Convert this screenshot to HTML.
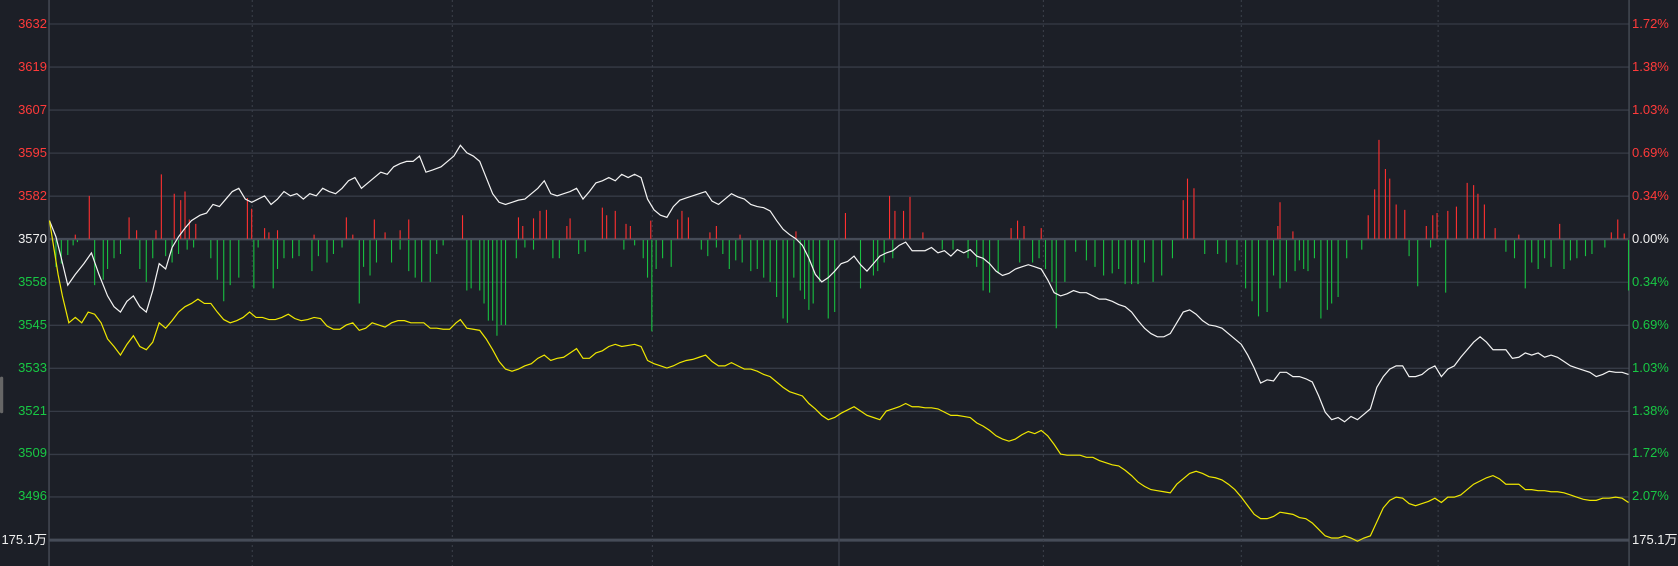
<!DOCTYPE html>
<html><head><meta charset="utf-8"><style>
html,body{margin:0;padding:0;background:#1c1f27;width:1678px;height:566px;overflow:hidden;position:relative;font-family:"Liberation Sans","Noto Sans CJK SC",sans-serif;}
svg{position:absolute;left:0;top:0}
.l{position:absolute;font-size:13px;line-height:14px;right:1631px;text-align:right;white-space:nowrap}
.r{position:absolute;font-size:13px;line-height:14px;left:1632px;white-space:nowrap}
.red{color:#ff3a3a}.grn{color:#18c844}.wht{color:#f0f0f0}
</style></head><body>
<svg width="1678" height="566" viewBox="0 0 1560 526" preserveAspectRatio="none">
<g stroke="#363b46" stroke-width="1.3" vector-effect="non-scaling-stroke" fill="none">
<path vector-effect="non-scaling-stroke" d="M45.6 22.3H1514.5M45.6 62.3H1514.5M45.6 102.3H1514.5M45.6 142.3H1514.5M45.6 182.3H1514.5M45.6 262.3H1514.5M45.6 302.3H1514.5M45.6 342.3H1514.5M45.6 382.3H1514.5M45.6 422.3H1514.5M45.6 461.8H1514.5"/>
</g>
<path d="M45.6 222.2H1514.5" stroke="#464c58" stroke-width="2.5" vector-effect="non-scaling-stroke"/>
<path d="M45.6 502H1514.5" stroke="#464c58" stroke-width="3" vector-effect="non-scaling-stroke"/>
<g stroke="#3c414c" stroke-width="1" stroke-dasharray="2 3" vector-effect="non-scaling-stroke">
<path vector-effect="non-scaling-stroke" d="M234.5 0V526M420.5 0V526M606.5 0V526M970 0V526M1154 0V526M1337 0V526"/>
</g>
<path d="M780 0V526" stroke="#3c414c" stroke-width="1.3" vector-effect="non-scaling-stroke"/>
<path d="M45.6 0V526M1514.5 0V526" stroke="#4a4f5a" stroke-width="1.3" vector-effect="non-scaling-stroke"/>
<rect x="0" y="350" width="3" height="34" rx="1.5" fill="#666"/>
<path stroke="#ff3030" stroke-width="1.1" vector-effect="non-scaling-stroke" d="M70 222V218M83 222V182M120 222V202M127 222V214M145 222V214M150 222V162M162 222V180M168 222V186M172 222V178M176 222V204M182 222V208M230 222V184M234 222V194M246 222V212M250 222V216M258 222V214M292 222V218M322 222V202M328 222V218M348 222V204M358 222V216M372 222V214M380 222V204M430 222V200M482 222V202M486 222V210M496 222V203M502 222V196M508 222V195M527 222V210M530 222V203M560 222V193M564 222V200M572 222V196M582 222V208M586 222V210M605 222V205M630 222V204M634 222V196M640 222V202M660 222V216M666 222V210M688 222V218M740 222V215M786 222V198M827 222V182M832 222V196M840 222V196M846 222V183M858 222V216M940 222V212M946 222V205M952 222V210M968 222V212M1100 222V186M1104 222V166M1110 222V175M1188 222V210M1190 222V188M1202 222V215M1272 222V200M1278 222V176M1282 222V130M1288 222V157M1292 222V166M1298 222V190M1306 222V195M1326 222V210M1332 222V200M1336 222V198M1346 222V196M1354 222V192M1364 222V170M1370 222V172M1374 222V180M1380 222V190M1390 222V212M1412 222V218M1450 222V208M1498 222V216M1504 222V204M1510 222V217"/>
<path stroke="#18c040" stroke-width="1.1" vector-effect="non-scaling-stroke" d="M52 223V248M57 223V245M63 223V237M68 223V228M72 223V225M88 223V265M96 223V260M100 223V250M106 223V240M112 223V236M130 223V250M136 223V262M142 223V240M154 223V238M160 223V244M166 223V236M174 223V232M180 223V230M196 223V240M202 223V260M208 223V280M214 223V265M222 223V258M236 223V268M240 223V230M254 223V268M258 223V250M264 223V240M272 223V240M278 223V238M290 223V252M296 223V238M304 223V244M310 223V236M318 223V230M334 223V282M338 223V248M344 223V256M350 223V244M364 223V244M372 223V232M380 223V252M386 223V258M392 223V262M400 223V262M406 223V236M412 223V228M434 223V270M438 223V268M446 223V270M450 223V282M454 223V298M458 223V298M462 223V312M466 223V302M470 223V302M480 223V240M488 223V230M496 223V232M514 223V240M520 223V240M538 223V236M544 223V234M580 223V232M590 223V228M598 223V240M602 223V258M606 223V308M610 223V250M616 223V240M624 223V248M652 223V232M658 223V238M666 223V230M672 223V236M678 223V250M684 223V242M690 223V244M698 223V252M704 223V250M710 223V258M716 223V262M722 223V276M728 223V296M732 223V300M738 223V258M744 223V270M748 223V278M752 223V288M756 223V282M762 223V262M770 223V296M776 223V290M800 223V268M812 223V256M816 223V252M822 223V244M830 223V240M876 223V232M886 223V232M900 223V240M908 223V248M914 223V270M920 223V272M928 223V254M948 223V244M960 223V244M966 223V240M972 223V250M978 223V262M982 223V305M990 223V262M1000 223V234M1010 223V242M1018 223V248M1026 223V256M1034 223V254M1040 223V250M1046 223V264M1052 223V264M1058 223V264M1064 223V244M1072 223V262M1080 223V256M1090 223V240M1120 223V236M1132 223V236M1140 223V244M1150 223V246M1158 223V268M1164 223V280M1170 223V294M1178 223V290M1184 223V256M1190 223V268M1196 223V262M1204 223V252M1208 223V242M1212 223V250M1216 223V252M1222 223V240M1228 223V296M1234 223V288M1238 223V282M1244 223V276M1252 223V240M1266 223V232M1310 223V238M1318 223V266M1330 223V230M1344 223V272M1400 223V234M1408 223V240M1418 223V268M1424 223V244M1430 223V250M1436 223V240M1442 223V248M1454 223V250M1460 223V242M1466 223V240M1474 223V238M1480 223V236M1492 223V230M1514 223V270"/>
<polyline fill="none" stroke="#f4f4f4" stroke-width="1.2" vector-effect="non-scaling-stroke" points="46,205 52,220 57,240 63,265 70,255 78,245 85,235 92,255 100,275 106,285 112,290 118,280 124,275 130,285 136,290 142,270 148,245 154,250 160,230 166,220 172,212 178,205 186,200 192,198 198,190 204,192 210,185 216,178 222,175 228,185 234,188 240,185 246,182 252,190 258,185 264,178 270,182 276,180 282,185 288,180 294,182 300,175 306,178 312,180 318,175 324,168 330,165 336,175 342,170 348,165 354,160 360,162 366,155 372,152 378,150 384,150 390,145 396,160 402,158 410,155 416,150 422,145 428,135 434,142 440,145 446,150 452,165 458,180 464,188 470,190 476,188 482,186 488,185 494,180 500,175 506,168 512,180 518,182 524,180 530,178 536,175 542,185 548,178 554,170 560,168 566,165 572,168 578,162 584,165 590,162 596,165 602,185 608,195 614,200 620,202 626,192 632,186 638,184 644,182 650,180 656,178 662,187 668,190 674,185 680,180 686,183 692,185 698,190 704,192 710,193 716,196 722,205 728,213 734,218 740,222 746,228 752,240 758,255 764,262 770,258 776,252 782,245 788,243 794,238 800,246 806,252 812,245 818,238 824,235 830,233 836,228 842,225 848,233 854,233 860,233 866,230 872,235 878,233 884,238 890,232 896,235 902,232 908,238 914,240 920,245 926,252 932,256 938,254 944,250 950,248 956,246 962,248 968,250 974,260 980,272 986,275 992,273 998,270 1004,272 1010,272 1016,275 1022,278 1028,278 1034,280 1040,283 1046,285 1052,290 1058,298 1064,305 1070,310 1076,313 1082,313 1088,310 1094,300 1100,290 1106,288 1112,292 1118,298 1124,302 1130,303 1136,305 1142,310 1148,315 1154,320 1160,330 1166,342 1172,356 1178,353 1184,354 1190,346 1196,346 1202,350 1208,350 1214,352 1220,355 1226,368 1232,383 1238,390 1244,388 1250,392 1256,387 1262,390 1268,385 1274,380 1280,360 1286,350 1292,343 1298,340 1304,340 1310,350 1316,350 1322,348 1328,343 1334,340 1340,350 1346,343 1352,340 1358,332 1364,325 1370,318 1376,313 1382,318 1388,325 1394,325 1400,325 1406,333 1412,332 1418,328 1424,330 1430,328 1436,332 1442,330 1448,332 1454,336 1460,340 1466,342 1472,344 1478,346 1484,350 1490,348 1496,345 1502,346 1508,346 1514,348"/>
<polyline fill="none" stroke="#f0e800" stroke-width="1.2" vector-effect="non-scaling-stroke" points="46,205 50,230 54,255 58,275 64,300 70,295 76,300 82,290 88,292 94,300 100,315 106,322 112,330 118,320 124,312 130,322 136,325 142,318 148,300 154,305 160,298 166,290 172,285 178,282 184,278 190,282 196,282 202,290 208,297 214,300 220,298 226,295 232,290 238,295 244,295 250,297 256,297 262,295 268,292 274,296 280,298 286,297 292,295 298,296 304,303 310,306 316,306 322,302 328,300 334,307 340,305 346,300 352,302 358,304 364,300 370,298 376,298 382,300 388,300 394,300 400,305 406,305 412,306 418,306 424,300 428,297 434,305 440,306 446,307 452,315 458,325 464,336 470,343 476,345 482,343 488,340 494,338 500,333 506,330 512,335 518,333 524,332 530,328 536,324 542,333 548,333 554,328 560,326 566,322 572,320 578,322 584,321 590,320 596,322 602,335 608,338 614,340 620,342 626,340 632,337 638,335 644,334 650,332 656,330 662,336 668,340 674,340 680,337 686,340 692,343 698,343 704,345 710,348 716,350 722,355 728,360 734,364 740,366 746,368 752,375 758,380 764,386 770,390 776,388 782,384 788,381 794,378 800,382 806,386 812,388 818,390 824,382 830,380 836,378 842,375 848,378 854,378 860,379 866,379 872,380 878,383 884,386 890,386 896,387 902,388 908,393 914,396 920,400 926,405 932,408 938,410 944,408 950,404 956,401 962,403 968,400 974,405 980,413 986,422 992,423 998,423 1004,423 1010,425 1016,425 1022,428 1028,430 1034,432 1040,433 1046,437 1052,442 1058,448 1064,452 1070,455 1076,456 1082,457 1088,458 1094,450 1100,445 1106,440 1112,438 1118,440 1124,443 1130,444 1136,446 1142,450 1148,455 1154,462 1160,470 1166,478 1172,482 1178,482 1184,480 1190,476 1196,477 1202,478 1208,481 1214,482 1220,486 1226,492 1232,498 1238,500 1244,500 1250,498 1256,500 1262,503 1268,500 1274,498 1280,485 1286,472 1292,465 1298,462 1304,463 1310,468 1316,470 1322,468 1328,466 1334,463 1340,467 1346,462 1352,462 1358,460 1364,455 1370,450 1376,447 1382,444 1388,442 1394,445 1400,450 1406,450 1412,450 1418,455 1424,455 1430,456 1436,456 1442,457 1448,457 1454,458 1460,460 1466,462 1472,464 1478,465 1484,465 1490,463 1496,463 1502,462 1508,463 1514,467"/>
</svg>
<div class="l red" style="top:17px">3632</div>
<div class="l red" style="top:60px">3619</div>
<div class="l red" style="top:103px">3607</div>
<div class="l red" style="top:146px">3595</div>
<div class="l red" style="top:189px">3582</div>
<div class="l wht" style="top:232px">3570</div>
<div class="l grn" style="top:275px">3558</div>
<div class="l grn" style="top:318px">3545</div>
<div class="l grn" style="top:361px">3533</div>
<div class="l grn" style="top:404px">3521</div>
<div class="l grn" style="top:446px">3509</div>
<div class="l grn" style="top:489px">3496</div>
<div class="l wht" style="top:533px">175.1万</div>
<div class="r red" style="top:17px">1.72%</div>
<div class="r red" style="top:60px">1.38%</div>
<div class="r red" style="top:103px">1.03%</div>
<div class="r red" style="top:146px">0.69%</div>
<div class="r red" style="top:189px">0.34%</div>
<div class="r wht" style="top:232px">0.00%</div>
<div class="r grn" style="top:275px">0.34%</div>
<div class="r grn" style="top:318px">0.69%</div>
<div class="r grn" style="top:361px">1.03%</div>
<div class="r grn" style="top:404px">1.38%</div>
<div class="r grn" style="top:446px">1.72%</div>
<div class="r grn" style="top:489px">2.07%</div>
<div class="r wht" style="top:533px">175.1万</div>
</body></html>
